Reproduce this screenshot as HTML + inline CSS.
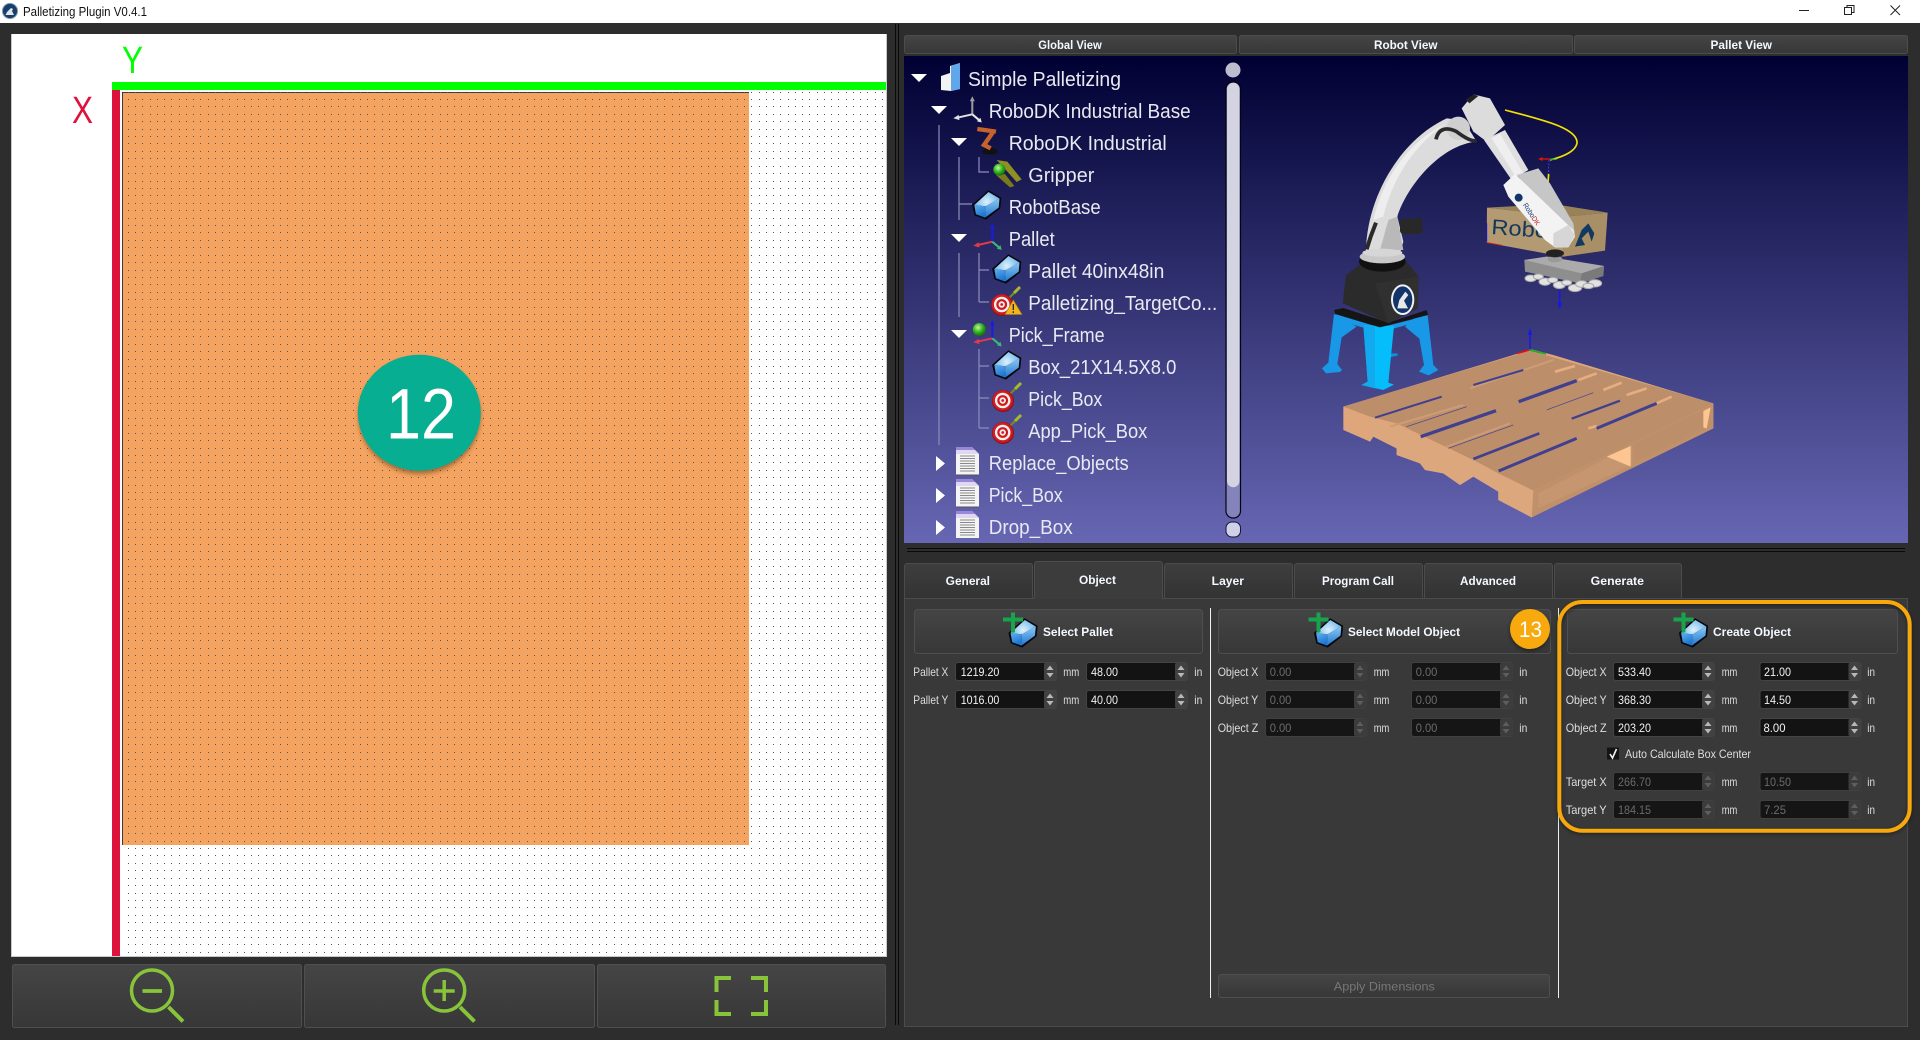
<!DOCTYPE html>
<html lang="en"><head><meta charset="utf-8"><title>Palletizing Plugin V0.4.1</title>
<style>
html,body{margin:0;padding:0;width:1920px;height:1040px;overflow:hidden;background:#2d2d2d}
svg{display:block}
text{font-family:"Liberation Sans",Arial,sans-serif}
.t{font-size:20px;fill:#e9e9f2}
.l{font-size:12px;fill:#dedede}
.v{font-size:12px;fill:#f2f2f2}
.d{font-size:12px;fill:#6b6b6b}
.b{font-size:11.5px;font-weight:bold;fill:#f4f8ff}
</style></head><body>
<svg width="1920" height="1040" viewBox="0 0 1920 1040" xmlns="http://www.w3.org/2000/svg">
<defs>
<linearGradient id="sky" x1="0" y1="0" x2="0" y2="1"><stop offset="0" stop-color="#000033"/><stop offset="1" stop-color="#6666b3"/></linearGradient>
<linearGradient id="btn" x1="0" y1="0" x2="0" y2="1"><stop offset="0" stop-color="#454545"/><stop offset="1" stop-color="#373737"/></linearGradient>
<linearGradient id="tab" x1="0" y1="0" x2="0" y2="1"><stop offset="0" stop-color="#3e3e3e"/><stop offset="1" stop-color="#333"/></linearGradient>
<radialGradient id="cubeT" gradientUnits="userSpaceOnUse" cx="14" cy="12" r="13"><stop offset="0" stop-color="#dff1fb"/><stop offset="1" stop-color="#6ab4ee"/></radialGradient>
<linearGradient id="cubeL" x1="0" y1="0" x2=".4" y2="1"><stop offset="0" stop-color="#5fb0ee"/><stop offset="1" stop-color="#1a74d0"/></linearGradient>
<linearGradient id="cubeR" x1="0" y1="0" x2="0" y2="1"><stop offset="0" stop-color="#8ac8f4"/><stop offset="1" stop-color="#2478d0"/></linearGradient>
<g id="dr"><rect x="0" width="1" height="1"/><rect x="7" width="1" height="1"/><rect x="14" width="1" height="1"/><rect x="22" width="1" height="1"/></g>
<pattern id="dots" patternUnits="userSpaceOnUse" x="128" y="99" width="29" height="89"><g fill="#555" shape-rendering="crispEdges"><use href="#dr" y="0"/><use href="#dr" y="7"/><use href="#dr" y="15"/><use href="#dr" y="22"/><use href="#dr" y="30"/><use href="#dr" y="37"/><use href="#dr" y="44"/><use href="#dr" y="52"/><use href="#dr" y="59"/><use href="#dr" y="67"/><use href="#dr" y="74"/><use href="#dr" y="82"/></g></pattern>
<filter id="sh" x="-20%" y="-20%" width="140%" height="140%"><feGaussianBlur stdDeviation="2.5"/></filter>
<filter id="sh2" x="-10%" y="-10%" width="120%" height="120%"><feGaussianBlur stdDeviation="2"/></filter>
<clipPath id="cv"><rect x="904" y="56" width="1004" height="482"/></clipPath>

<g id="spin"><rect x=".5" y=".5" width="101" height="18" rx="2.5" fill="#131313" stroke="#444"/><rect x="89" y="1" width="12.5" height="17" rx="1.5" fill="#414141"/><path d="M91.5 8 95 3.5 98.5 8zM91.5 11 95 15.5 98.5 11z" fill="#b8b8b8"/></g>
<g id="spind"><rect x=".5" y=".5" width="101" height="18" rx="2.5" fill="#151515" stroke="#404040"/><rect x="89" y="1" width="12.5" height="17" rx="1.5" fill="#3c3c3c"/><path d="M91.5 8 95 3.5 98.5 8zM91.5 11 95 15.5 98.5 11z" fill="#5e5e5e"/></g>

<g id="cube"><path d="M15.7 .2 28.6 7.8 27.6 18.4 13.2 29.6 1.8 25.4-.6 14.8z" fill="#06060c"/><path d="M15.8 2 26.8 8.5 13 16.4 1.6 15z" fill="url(#cubeT)"/><path d="M1.6 15 13 16.4 12.4 27.6 3.2 24.2z" fill="url(#cubeL)"/><path d="M13 16.4 26.8 8.5 26 17.6 12.4 27.6z" fill="url(#cubeR)"/></g>
<g id="pcube"><use href="#cube"/><rect x="-6" y="-.5" width="20" height="4" fill="#18a44c"/><rect x="2" y="-5.5" width="4" height="20" fill="#18a44c"/></g>

<g id="tgt"><line x1="4" y1="-4" x2="12" y2="-12" stroke="#6f8f1c" stroke-width="2"/><line x1="12" y1="-12" x2="18" y2="-18" stroke="#a6bb2c" stroke-width="3"/><circle r="11" fill="#8e1014"/><circle cx="-.3" cy="-.5" r="10.200" fill="#d01c20"/><circle cx="-.3" cy="-.5" r="7.800" fill="#f4eeee"/><circle cx="-.3" cy="-.5" r="5.400" fill="#cf1a1f"/><circle cx="-.3" cy="-.5" r="3.200" fill="#f4eeee"/><circle cx="-.3" cy="-.5" r="1.400" fill="#cf1a1f"/></g>

<g id="doc"><path d="M0 0H16L23 7V28H0z" fill="#f4f4f6"/><path d="M0 0H16L19 3H0z" fill="#9a86da"/><path d="M0 3H19L23 7H0z" fill="#ddd8f0"/><path d="M4 9h15M4 11.5h15M4 14h15M4 16.5h15M4 19h15M4 21.5h15M4 24h15" stroke="#8a8a8a"/><path d="M0 28h23" stroke="#555"/></g>

<g id="fr"><path d="M0 0V-15" stroke="var(--c1)" stroke-width="2"/><path d="M-2.500-13 0-18 2.500-13z" fill="var(--c1)"/><path d="M0 0-15 3.400" stroke="var(--c2)" stroke-width="2"/><path d="M-13.600 .6-19 4-12.800 5.800z" fill="var(--c2)"/><path d="M0 0 6.500 5.500" stroke="var(--c3)" stroke-width="2"/><path d="M4.600 7 9.400 8.200 8.200 3.400z" fill="var(--c3)"/></g>
<radialGradient id="ball" cx=".4" cy=".35" r=".65"><stop offset="0" stop-color="#c6f7a0"/><stop offset=".55" stop-color="#34b61e"/><stop offset="1" stop-color="#146e10"/></radialGradient>
</defs>

<!-- window -->
<rect width="1920" height="1040" fill="#2d2d2d"/>
<rect width="1920" height="23" fill="#fff"/>
<circle cx="10" cy="11" r="7.600" fill="#173f69" stroke="#8fa3b5" stroke-width="1"/><path d="M5.500 15 7 12 11 8 13 9 12 11 14 15z" fill="#dfe7ee"/>
<text x="23" y="16" font-size="12.500" fill="#111" textLength="124" lengthAdjust="spacingAndGlyphs">Palletizing Plugin V0.4.1</text>
<path d="M1799 10.500h10" stroke="#222"/>
<path d="M1844.500 7.500h7v7h-7zM1847 7.500V5.500h7v7h-2.500" fill="none" stroke="#222"/>
<path d="M1890.500 5.500l9.500 9.500M1900 5.500l-9.500 9.500" stroke="#222" stroke-width="1"/>

<!-- left canvas -->
<rect x="11" y="34" width="876" height="923" fill="#c9c9c9"/>
<rect x="12" y="34" width="874" height="922" fill="#fff"/>
<rect x="122" y="92" width="627" height="753" fill="#f4a460"/>
<path d="M122.500 845V92.500H749" fill="none" stroke="#3a3a3a" stroke-width="1"/>
<rect x="122" y="92" width="764" height="863" fill="url(#dots)"/>
<rect x="112" y="82" width="774" height="8" fill="#00ff00"/>
<rect x="112" y="90" width="8" height="866" fill="#dc143c"/>
<text x="122" y="73" font-size="38" fill="#00ff00" textLength="21" lengthAdjust="spacingAndGlyphs">Y</text>
<text x="72" y="123" font-size="38" fill="#dc143c" textLength="21" lengthAdjust="spacingAndGlyphs">X</text>
<ellipse cx="419.500" cy="416" rx="61" ry="58" fill="#7a4a20" opacity=".65" filter="url(#sh)"/>
<ellipse cx="419.300" cy="412.700" rx="61.500" ry="58" fill="#08ae91"/>
<text x="386" y="438.300" font-size="71" fill="#fff" textLength="70" lengthAdjust="spacingAndGlyphs">12</text>

<!-- zoom buttons -->
<g stroke="#4f4f4f" fill="url(#btn)"><rect x="12.500" y="964.500" width="289" height="63" rx="2"/><rect x="304.500" y="964.500" width="290" height="63" rx="2"/><rect x="597.500" y="964.500" width="288" height="63" rx="2"/></g>
<g fill="none" stroke="#88c43a" stroke-width="3.500">
<ellipse cx="152" cy="990.500" rx="20.500" ry="20.500"/><path d="M168.500 1007 183 1021.500" stroke-width="4"/><path d="M142.500 991h19.500" stroke-width="3.800"/>
<ellipse cx="444.200" cy="990.500" rx="20.500" ry="20.500"/><path d="M460 1007 474.500 1021.500" stroke-width="4"/><path d="M433.700 991h21M444.200 980v21" stroke-width="3.500"/>
<path d="M731 978h-14.500v14M751 978h15v14M731 1014h-14.500v-14M751 1014h15v-14" stroke-width="4"/>
</g>

<!-- splitters -->
<path d="M895.500 24V1025M898.500 24V1025" stroke="#0a0a0a"/>

<!-- top tabs -->
<g stroke="#4c4c4c" fill="url(#btn)"><rect x="904.500" y="35.500" width="332" height="18" rx="2"/><rect x="1239.500" y="35.500" width="333" height="18" rx="2"/><rect x="1574.500" y="35.500" width="333" height="18" rx="2"/></g>
<text class="b" x="1038.300" y="49" textLength="63.500" lengthAdjust="spacingAndGlyphs">Global View</text>
<text class="b" x="1374" y="49" textLength="63.500" lengthAdjust="spacingAndGlyphs">Robot View</text>
<text class="b" x="1710.500" y="49" textLength="61.500" lengthAdjust="spacingAndGlyphs">Pallet View</text>

<!-- 3D view -->
<rect x="904" y="56" width="1004" height="487" fill="url(#sky)"/>

<!-- robot scene -->
<g transform="translate(1260,60) scale(.33333)">
<!-- pallet -->
<path d="M250 1040 815 868 880 885 1360 1030V1105L815 1372 715 1320V1295L640 1250 600 1275 550 1240 495 1230 480 1210 410 1185V1165L340 1130 330 1145 250 1110z" fill="#dfa67b"/>
<path d="M250 1040 810 872 1360 1030 820 1292 715 1240 640 1200 410 1090 330 1070z" fill="#bd8e6a"/>
<path d="M820 1292 1360 1030V1105L815 1372z" fill="#bf9069"/>
<path d="M835 1300 1115 1155V1215L835 1345z" fill="#c59670"/>
<path d="M1040 1190 1112 1158V1220z" fill="#fdc690"/><path d="M1275 1080 1352 1042 1340 1106z" fill="#fdc690"/>
<path d="M1125 1152 1330 1050 1330 1108 1125 1205z" fill="#bd8e6a"/>
<path d="M330 1072 640 1200 715 1240 820 1292 815 1372 715 1320V1295L640 1250 600 1275 550 1240 495 1230 480 1210 410 1185V1165L340 1130 330 1145z" fill="#dca77c"/>
<g fill="none" stroke="#cc9c75" stroke-width="6"><path d="M630 985 880 900M390 1100 610 1035M560 1160 750 1090"/></g>
<g fill="none" stroke="#e6ad83" stroke-width="8"><path d="M885 935 945 918M955 960 1010 940M1030 990 1085 968M1100 1005 1160 985M1190 1030 1235 1010M985 1105 1010 1098"/></g>
<g fill="none" stroke="#40408f" stroke-linecap="butt"><path d="M345 1073 545 1010" stroke-width="6"/><path d="M482 1130 708 1052" stroke-width="10"/><path d="M640 1197 838 1120" stroke-width="8"/><path d="M716 1233 950 1135" stroke-width="9"/><path d="M640 975 790 930" stroke-width="6"/><path d="M776 1025 950 962" stroke-width="10"/><path d="M935 1076 1080 1022" stroke-width="7"/><path d="M1010 1105 1190 1030" stroke-width="9"/><path d="M565 1165 760 1095" stroke-width="2"/><path d="M860 1050 1000 998" stroke-width="2"/><path d="M440 1100 620 1040" stroke-width="2"/></g>
<!-- pallet frame -->
<path d="M810 870V825" stroke="#1717e8" stroke-width="4"/><path d="M804 825 810 803 816 825z" fill="#1717e8"/>
<path d="M808 870 772 880" stroke="#e01010" stroke-width="5"/><path d="M808 870 858 882" stroke="#17b317" stroke-width="5"/>
<!-- stand -->
<path d="M385 880H413V887L385 893z" fill="#0f8fdc"/>
<path d="M222 762 255 782 290 800 245 832 232 912 246 930 240 936 198 940 186 925 205 908z" fill="#1898e6"/>
<path d="M470 768 503 765 520 915 535 930 506 946 477 935 492 915 478 836 435 800z" fill="#1898e6"/>
<path d="M225 762 360 803 503 767 500 778 400 806 310 803 245 784z" fill="#1898e6"/>
<path d="M310 795 402 798 385 968 402 974 370 990 304 975 323 965z" fill="#06bdfb"/>
<path d="M345 798 310 795 323 965 304 975 345 985z" fill="#12a9ee"/>
<!-- base -->
<path d="M222 750 250 744 385 788 500 750 504 765 360 802 226 762z" fill="#151515"/>
<path d="M298 615 440 605 476 650 474 745 385 790 248 730 258 645z" fill="#2b2b2b"/>
<path d="M345 670 476 650 474 745 385 790z" fill="#303030"/>
<ellipse cx="367" cy="605" rx="70" ry="30" fill="#111"/>
<ellipse cx="367" cy="590" rx="68" ry="20" fill="#c8c8c8"/>
<ellipse cx="428" cy="719" rx="35" ry="46" fill="#f2f2f2"/>
<ellipse cx="428" cy="719" rx="29" ry="40" fill="#12346b"/>
<path d="M412 745 418 720 436 695 445 705 432 722 444 745z" fill="#e8e8e8"/>
<!-- box -->
<path d="M681 443 880 432 1043 458 915 470z" fill="#9a8258"/>
<path d="M681 443 915 470 910 590 680 548z" fill="#b39a72"/>
<path d="M915 470 1043 458 1035 572 910 590z" fill="#a98f66"/>
<text x="693" y="522" font-size="64" fill="#11395e" transform="rotate(4 693 522)" textLength="170" lengthAdjust="spacingAndGlyphs">Robo</text>
<path d="M945 560 965 510 985 490 1003 520 995 545 985 515 965 535 975 555z" fill="#123a60"/>
<path d="M680 548 725 556" stroke="#d01818" stroke-width="3"/>
<path d="M680 490V545" stroke="#1717c8" stroke-width="3"/>
<!-- gripper -->
<path d="M793 600 860 590 1032 618 1030 648 960 670 795 635z" fill="#8e8e8e"/>
<path d="M793 600 860 590 1032 618 965 640z" fill="#ababab"/>
<path d="M965 640 1032 618 1030 648 960 670z" fill="#7a7a7a"/>
<g fill="#e2e2e2" stroke="#a6a6a6" stroke-width="3"><ellipse cx="812" cy="655" rx="17" ry="10"/><ellipse cx="855" cy="665" rx="18" ry="11"/><ellipse cx="898" cy="675" rx="18" ry="11"/><ellipse cx="945" cy="684" rx="20" ry="11"/><ellipse cx="965" cy="672" rx="18" ry="10"/><ellipse cx="1005" cy="670" rx="20" ry="11"/><ellipse cx="835" cy="650" rx="15" ry="8"/><ellipse cx="878" cy="660" rx="15" ry="8"/><ellipse cx="920" cy="668" rx="15" ry="8"/><ellipse cx="985" cy="678" rx="16" ry="8"/></g>
<path d="M899 690V730" stroke="#1717e8" stroke-width="5"/><path d="M892 728 899 748 906 728z" fill="#1717e8"/>
<ellipse cx="885" cy="597" rx="22" ry="10" fill="#9a9a9a"/><ellipse cx="885" cy="580" rx="27" ry="12" fill="#222"/>
<!-- lower arm -->
<path d="M318 570C322 410 420 240 560 175L610 180 650 245C540 255 440 380 412 470L430 545 420 580H310z" fill="#dcdcdc"/>
<path d="M340 480C370 350 450 240 560 190 480 240 400 340 370 470z" fill="#eeeeee"/>
<circle cx="595" cy="205" r="35" fill="#cfcfcf"/>
<path d="M412 470 385 480 360 570H430z" fill="#b9b9b9"/>
<rect x="420" y="475" width="67" height="47" rx="10" fill="#282828"/>
<path d="M348 488 332 530 320 568" fill="none" stroke="#2a2a2a" stroke-width="12"/>
<path d="M528 238C535 205 560 200 590 215 610 230 630 243 650 243" fill="none" stroke="#2a2a2a" stroke-width="11"/>
<ellipse cx="367" cy="578" rx="60" ry="12" fill="#d6d6d6"/>
<!-- upper arm -->
<path d="M735 150C850 180 955 205 951 250 945 280 890 295 870 300" fill="none" stroke="#f2e400" stroke-width="5"/>
<path d="M866 342 862 392" stroke="#f2e400" stroke-width="5"/>
<path d="M867 300 865 342" stroke="#3a3af0" stroke-width="3" stroke-dasharray="6 4"/>
<path d="M870 297 845 297" stroke="#e01010" stroke-width="4"/><path d="M848 291 834 297 848 303z" fill="#e01010"/><path d="M870 298 890 298" stroke="#2db82d" stroke-width="4"/>
<path d="M605 145 640 103 690 115 735 195 680 245 640 215z" fill="#dcdcdc"/>
<path d="M618 118 640 103 655 108 628 130z" fill="#222"/>
<path d="M672 240 735 210 805 330 755 360z" fill="#dfdfdf"/>
<path d="M695 235 720 222 790 340 768 352z" fill="#efefef"/>
<path d="M770 345 835 325 870 370 940 490 945 525 900 500z" fill="#c6c6c6"/>
<path d="M730 375 765 342 940 510 945 530 925 562 885 562 855 540 745 410z" fill="#f3f3f3"/>
<path d="M880 520 925 495 945 525 925 562 880 560z" fill="#d6d6d6"/>
<circle cx="776" cy="413" r="12" fill="#12346b"/>
<text x="788" y="435" font-size="22" fill="#1a3d74" transform="rotate(57 788 435)" textLength="75" lengthAdjust="spacingAndGlyphs">Robo<tspan fill="#c81818">DK</tspan></text>
</g>

<!-- tree lines -->
<g stroke="#8d8dba" fill="none" stroke-width="1.200">
<path d="M939 125V445"/>
<path d="M959 157V220M959 204H972"/>
<path d="M979 157V172H989"/>
<path d="M959 253V317M979 253V302M979 270H989M979 302H989"/>
<path d="M979 349V428M979 366H989M979 398H989M979 428H989"/>
</g>
<!-- tree triangles -->
<g fill="#fff">
<path d="M911 74H927L919 82zM931 106H947L939 114zM951 138H967L959 146zM951 234H967L959 242zM951 330H967L959 338z"/>
<path d="M936 456 945 463.500 936 471zM936 488 945 495.500 936 503zM936 520 945 527.500 936 535z"/>
</g>
<!-- tree icons -->
<path d="M941 76 950 73V66L960 63V89L951 91 941 90z" fill="#f3f3f3"/><path d="M951 66 960 63V89L951 91z" fill="#5fa6ea"/>
<use href="#fr" x="972.300" y="114.300" style="--c1:#9d9d9d;--c2:#e0e0e0;--c3:#e8e8e8"/>
<g transform="translate(900,20) scale(.33333)">
<ellipse cx="270" cy="394" rx="23" ry="10" fill="#111"/>
<path d="M232 327 288 335" fill="none" stroke="#c8622c" stroke-width="13"/>
<path d="M278 338 252 375 272 385" fill="none" stroke="#c8622c" stroke-width="13"/>
<path d="M290 420 322 425 365 478 350 486 315 447z" fill="#8f8f22"/><path d="M288 465 315 462 343 498 330 502z" fill="#7a7a1a"/>
<circle cx="298" cy="449" r="18" fill="url(#ball)"/>
</g>
<use href="#cube" x="972.700" y="190"/>
<use href="#fr" x="992.300" y="241.700" style="--c1:#1a1ae8;--c2:#e33a4a;--c3:#3cb878"/>
<use href="#cube" x="992.700" y="254"/>
<use href="#tgt" x="1002" y="305"/>
<path d="M1005 314.500 1013.300 300 1022 314.500z" fill="#f2b41b" stroke="#a57a10" stroke-width=".6"/><path d="M1013.300 304V310M1013.300 311.300V313" stroke="#222" stroke-width="1.300"/>
<use href="#fr" x="992.300" y="338.300" style="--c1:#1a1ae8;--c2:#e33a4a;--c3:#3cb878"/>
<circle cx="979.300" cy="329.500" r="6.500" fill="url(#ball)"/>
<use href="#cube" x="992.700" y="350"/>
<use href="#tgt" x="1003" y="401"/>
<use href="#tgt" x="1003" y="433"/>
<use href="#doc" x="956" y="447"/>
<use href="#doc" x="956" y="479"/>
<g clip-path="url(#cv)"><use href="#doc" x="956" y="511"/></g>
<!-- tree text -->
<text class="t" x="968" y="86" textLength="153" lengthAdjust="spacingAndGlyphs">Simple Palletizing</text>
<text class="t" x="988.700" y="118" textLength="202" lengthAdjust="spacingAndGlyphs">RoboDK Industrial Base</text>
<text class="t" x="1008.700" y="150" textLength="158" lengthAdjust="spacingAndGlyphs">RoboDK Industrial</text>
<text class="t" x="1028.300" y="182" textLength="66" lengthAdjust="spacingAndGlyphs">Gripper</text>
<text class="t" x="1008.700" y="214" textLength="92" lengthAdjust="spacingAndGlyphs">RobotBase</text>
<text class="t" x="1008.700" y="246" textLength="46" lengthAdjust="spacingAndGlyphs">Pallet</text>
<text class="t" x="1028.300" y="278" textLength="136" lengthAdjust="spacingAndGlyphs">Pallet 40inx48in</text>
<text class="t" x="1028.300" y="310" textLength="189" lengthAdjust="spacingAndGlyphs">Palletizing_TargetCo...</text>
<text class="t" x="1008.700" y="342" textLength="96" lengthAdjust="spacingAndGlyphs">Pick_Frame</text>
<text class="t" x="1028.300" y="374" textLength="148" lengthAdjust="spacingAndGlyphs">Box_21X14.5X8.0</text>
<text class="t" x="1028.300" y="406" textLength="74" lengthAdjust="spacingAndGlyphs">Pick_Box</text>
<text class="t" x="1028.300" y="438" textLength="119" lengthAdjust="spacingAndGlyphs">App_Pick_Box</text>
<text class="t" x="988.700" y="470" textLength="140" lengthAdjust="spacingAndGlyphs">Replace_Objects</text>
<text class="t" x="988.700" y="502" textLength="74" lengthAdjust="spacingAndGlyphs">Pick_Box</text>
<text class="t" x="988.700" y="534" textLength="84" lengthAdjust="spacingAndGlyphs">Drop_Box</text>
<!-- tree scrollbar -->
<circle cx="1233" cy="70" r="7.500" fill="#bdbdcf"/>
<rect x="1226" y="82" width="14.500" height="436" rx="7" fill="#8484bb" stroke="#050510" stroke-width="1.200"/>
<path d="M1227 89a6 6 0 0 1 12.500 0V481a6.200 6.200 0 0 1-12.500 0z" fill="#d3d3e2"/>
<rect x="1226" y="522" width="14.500" height="15" rx="6" fill="#d0d0e6" stroke="#15153a" stroke-width="1"/>

<!-- h splitter -->
<path d="M907 548.500H1905M907 551.500H1905" stroke="#0a0a0a"/>

<!-- tabs pane -->
<rect x="904.500" y="598.500" width="1003" height="428" fill="#393939" stroke="#4c4c4c"/>
<g stroke="#4b4b4b" fill="url(#tab)">
<path d="M904.500 598V566a2.500 2.500 0 0 1 2.500-2.500H1030a2.500 2.500 0 0 1 2.500 2.500V598"/>
<path d="M1164.500 598V566a2.500 2.500 0 0 1 2.500-2.500H1290a2.500 2.500 0 0 1 2.500 2.500V598"/>
<path d="M1294.500 598V566a2.500 2.500 0 0 1 2.500-2.500H1420a2.500 2.500 0 0 1 2.500 2.500V598"/>
<path d="M1424.500 598V566a2.500 2.500 0 0 1 2.500-2.500H1550a2.500 2.500 0 0 1 2.500 2.500V598"/>
<path d="M1554.500 598V566a2.500 2.500 0 0 1 2.500-2.500H1679a2.500 2.500 0 0 1 2.500 2.500V598"/>
</g>
<path d="M1034.500 599V564a2.500 2.500 0 0 1 2.500-2.500H1160a2.500 2.500 0 0 1 2.500 2.500V599z" fill="#3c3c3c"/>
<path d="M1034.500 598V564a2.500 2.500 0 0 1 2.500-2.500H1160a2.500 2.500 0 0 1 2.500 2.500V598" fill="none" stroke="#4d4d4d"/>
<text class="b" x="945.700" y="585" textLength="44.300" lengthAdjust="spacingAndGlyphs">General</text>
<text class="b" x="1079" y="584" textLength="37" lengthAdjust="spacingAndGlyphs">Object</text>
<text class="b" x="1211.700" y="585" textLength="32.300" lengthAdjust="spacingAndGlyphs">Layer</text>
<text class="b" x="1322" y="585" textLength="72" lengthAdjust="spacingAndGlyphs">Program Call</text>
<text class="b" x="1460" y="585" textLength="56" lengthAdjust="spacingAndGlyphs">Advanced</text>
<text class="b" x="1590.700" y="585" textLength="53.300" lengthAdjust="spacingAndGlyphs">Generate</text>

<!-- vertical separators -->
<path d="M1210.500 608V998M1558.500 608V998" stroke="#f0f0f0"/>

<!-- buttons -->
<g stroke="#4f4f4f" fill="url(#btn)">
<rect x="914.500" y="609.500" width="288" height="44" rx="3"/>
<rect x="1218.500" y="609.500" width="332" height="44" rx="3"/>
<rect x="1567.500" y="609.500" width="330" height="44" rx="3"/>
<rect x="1218.500" y="974.500" width="331" height="23" rx="2.500"/>
</g>
<use href="#pcube" x="1009" y="618"/><use href="#pcube" x="1314.500" y="618"/><use href="#pcube" x="1679.500" y="618"/>
<text class="b" x="1043" y="636" textLength="70" lengthAdjust="spacingAndGlyphs">Select Pallet</text>
<text class="b" x="1348" y="636" textLength="112" lengthAdjust="spacingAndGlyphs">Select Model Object</text>
<text class="b" x="1713" y="636" textLength="78" lengthAdjust="spacingAndGlyphs">Create Object</text>
<text x="1333.800" y="990.500" font-size="12" fill="#777" textLength="101" lengthAdjust="spacingAndGlyphs">Apply Dimensions</text>

<!-- pallet column -->
<use href="#spin" x="955" y="662"/><use href="#spin" x="1086" y="662"/><use href="#spin" x="955" y="690"/><use href="#spin" x="1086" y="690"/>
<text class="l" x="913.300" y="676" textLength="35" lengthAdjust="spacingAndGlyphs">Pallet X</text><text class="v" x="960.700" y="676" textLength="38.700" lengthAdjust="spacingAndGlyphs">1219.20</text><text class="l" x="1063.300" y="676" textLength="16" lengthAdjust="spacingAndGlyphs">mm</text><text class="v" x="1091" y="676" textLength="27" lengthAdjust="spacingAndGlyphs">48.00</text><text class="l" x="1194.300" y="676" textLength="8" lengthAdjust="spacingAndGlyphs">in</text>
<text class="l" x="913.300" y="704" textLength="35" lengthAdjust="spacingAndGlyphs">Pallet Y</text><text class="v" x="960.700" y="704" textLength="38.700" lengthAdjust="spacingAndGlyphs">1016.00</text><text class="l" x="1063.300" y="704" textLength="16" lengthAdjust="spacingAndGlyphs">mm</text><text class="v" x="1091" y="704" textLength="27" lengthAdjust="spacingAndGlyphs">40.00</text><text class="l" x="1194.300" y="704" textLength="8" lengthAdjust="spacingAndGlyphs">in</text>

<!-- model column -->
<use href="#spind" x="1265" y="662"/><use href="#spind" x="1411" y="662"/><use href="#spind" x="1265" y="690"/><use href="#spind" x="1411" y="690"/><use href="#spind" x="1265" y="718"/><use href="#spind" x="1411" y="718"/>
<text class="l" x="1217.700" y="676" textLength="40.600" lengthAdjust="spacingAndGlyphs">Object X</text><text class="d" x="1269.700" y="676" textLength="21.700" lengthAdjust="spacingAndGlyphs">0.00</text><text class="l" x="1373.700" y="676" textLength="15.600" lengthAdjust="spacingAndGlyphs">mm</text><text class="d" x="1415.700" y="676" textLength="21.700" lengthAdjust="spacingAndGlyphs">0.00</text><text class="l" x="1519.300" y="676" textLength="8" lengthAdjust="spacingAndGlyphs">in</text>
<text class="l" x="1217.700" y="704" textLength="40.600" lengthAdjust="spacingAndGlyphs">Object Y</text><text class="d" x="1269.700" y="704" textLength="21.700" lengthAdjust="spacingAndGlyphs">0.00</text><text class="l" x="1373.700" y="704" textLength="15.600" lengthAdjust="spacingAndGlyphs">mm</text><text class="d" x="1415.700" y="704" textLength="21.700" lengthAdjust="spacingAndGlyphs">0.00</text><text class="l" x="1519.300" y="704" textLength="8" lengthAdjust="spacingAndGlyphs">in</text>
<text class="l" x="1217.700" y="732" textLength="40.600" lengthAdjust="spacingAndGlyphs">Object Z</text><text class="d" x="1269.700" y="732" textLength="21.700" lengthAdjust="spacingAndGlyphs">0.00</text><text class="l" x="1373.700" y="732" textLength="15.600" lengthAdjust="spacingAndGlyphs">mm</text><text class="d" x="1415.700" y="732" textLength="21.700" lengthAdjust="spacingAndGlyphs">0.00</text><text class="l" x="1519.300" y="732" textLength="8" lengthAdjust="spacingAndGlyphs">in</text>

<!-- create column -->
<use href="#spin" x="1613" y="662"/><use href="#spin" x="1759.500" y="662"/><use href="#spin" x="1613" y="690"/><use href="#spin" x="1759.500" y="690"/><use href="#spin" x="1613" y="718"/><use href="#spin" x="1759.500" y="718"/>
<use href="#spind" x="1613" y="772"/><use href="#spind" x="1759.500" y="772"/><use href="#spind" x="1613" y="800"/><use href="#spind" x="1759.500" y="800"/>
<text class="l" x="1565.700" y="676" textLength="41" lengthAdjust="spacingAndGlyphs">Object X</text><text class="v" x="1618" y="676" textLength="33" lengthAdjust="spacingAndGlyphs">533.40</text><text class="l" x="1721.700" y="676" textLength="15.600" lengthAdjust="spacingAndGlyphs">mm</text><text class="v" x="1764" y="676" textLength="27" lengthAdjust="spacingAndGlyphs">21.00</text><text class="l" x="1867.300" y="676" textLength="7.700" lengthAdjust="spacingAndGlyphs">in</text>
<text class="l" x="1565.700" y="704" textLength="41" lengthAdjust="spacingAndGlyphs">Object Y</text><text class="v" x="1618" y="704" textLength="33" lengthAdjust="spacingAndGlyphs">368.30</text><text class="l" x="1721.700" y="704" textLength="15.600" lengthAdjust="spacingAndGlyphs">mm</text><text class="v" x="1764" y="704" textLength="27" lengthAdjust="spacingAndGlyphs">14.50</text><text class="l" x="1867.300" y="704" textLength="7.700" lengthAdjust="spacingAndGlyphs">in</text>
<text class="l" x="1565.700" y="732" textLength="41" lengthAdjust="spacingAndGlyphs">Object Z</text><text class="v" x="1618" y="732" textLength="33" lengthAdjust="spacingAndGlyphs">203.20</text><text class="l" x="1721.700" y="732" textLength="15.600" lengthAdjust="spacingAndGlyphs">mm</text><text class="v" x="1763.500" y="732" textLength="22" lengthAdjust="spacingAndGlyphs">8.00</text><text class="l" x="1867.300" y="732" textLength="7.700" lengthAdjust="spacingAndGlyphs">in</text>
<rect x="1606.500" y="747" width="13" height="13" fill="#141414" stroke="#3a3a3a"/><path d="M1610 754 1612.500 758 1616.500 749" fill="none" stroke="#f2f2f2" stroke-width="1.600"/>
<text class="l" x="1625" y="758" textLength="126" lengthAdjust="spacingAndGlyphs">Auto Calculate Box Center</text>
<text class="l" x="1565.700" y="786" textLength="41" lengthAdjust="spacingAndGlyphs">Target X</text><text class="d" x="1618" y="786" textLength="33" lengthAdjust="spacingAndGlyphs">266.70</text><text class="l" x="1721.700" y="786" textLength="15.600" lengthAdjust="spacingAndGlyphs">mm</text><text class="d" x="1764" y="786" textLength="27" lengthAdjust="spacingAndGlyphs">10.50</text><text class="l" x="1867.300" y="786" textLength="7.700" lengthAdjust="spacingAndGlyphs">in</text>
<text class="l" x="1565.700" y="814" textLength="41" lengthAdjust="spacingAndGlyphs">Target Y</text><text class="d" x="1618" y="814" textLength="33" lengthAdjust="spacingAndGlyphs">184.15</text><text class="l" x="1721.700" y="814" textLength="15.600" lengthAdjust="spacingAndGlyphs">mm</text><text class="d" x="1764" y="814" textLength="22" lengthAdjust="spacingAndGlyphs">7.25</text><text class="l" x="1867.300" y="814" textLength="7.700" lengthAdjust="spacingAndGlyphs">in</text>

<!-- highlight -->
<rect x="1559.300" y="604" width="350.400" height="228" rx="23" fill="none" stroke="#000" stroke-opacity=".45" stroke-width="4" filter="url(#sh2)"/>
<rect x="1559.300" y="602" width="350.400" height="228.700" rx="23" fill="none" stroke="#f6a80d" stroke-width="4"/>
<circle cx="1530" cy="631" r="20" fill="#000" opacity=".4" filter="url(#sh2)"/>
<circle cx="1530" cy="629" r="20" fill="#f7a90e"/>
<text x="1519" y="637" font-size="22.500" fill="#fff" textLength="23" lengthAdjust="spacingAndGlyphs">13</text>
</svg>
</body></html>
